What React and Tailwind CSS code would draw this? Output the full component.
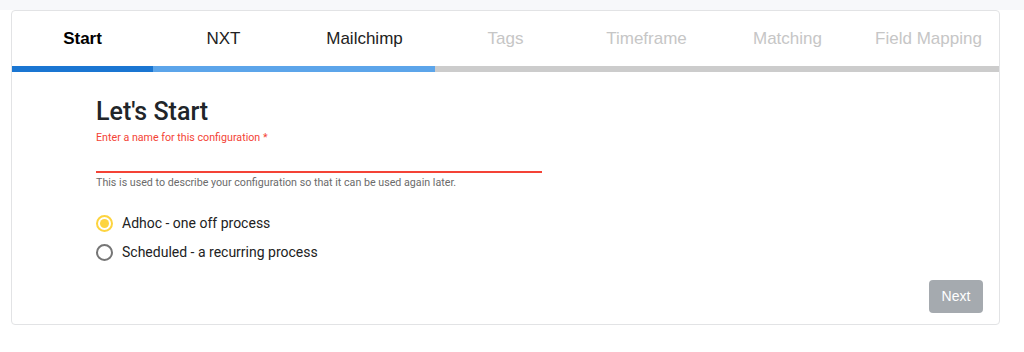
import React from "react";

const tabs = [
  { label: "Start", cls: "font-bold text-black" },
  { label: "NXT", cls: "text-[#222]" },
  { label: "Mailchimp", cls: "text-[#222]" },
  { label: "Tags", cls: "text-[#c6c6c6]" },
  { label: "Timeframe", cls: "text-[#c6c6c6]" },
  { label: "Matching", cls: "text-[#c6c6c6]" },
  { label: "Field Mapping", cls: "text-[#c6c6c6]" },
];

export default function App() {
  return (
    <div className="w-[1024px] h-[352px] bg-white font-['Liberation_Sans',sans-serif] overflow-hidden">
      <div className="h-[10px] bg-[#f7f8fa]" />
      <div className="ml-[11px] w-[989px] border border-[#e2e3e5] rounded-[4px] bg-white overflow-hidden">
        <div className="grid grid-cols-7 h-[55px] items-center">
          {tabs.map((t) => (
            <div key={t.label} className={`text-center text-[17px] leading-[20px] ${t.cls}`}>
              {t.label}
            </div>
          ))}
        </div>
        <div className="flex h-[6px]">
          <div className="w-[141px] bg-[#1a76d2]" />
          <div className="w-[282px] bg-[#5ca5ea]" />
          <div className="flex-1 bg-[#cccccc]" />
        </div>
        <div className="pl-[84px] pt-[25px] font-['Roboto',sans-serif]">
          <h1 className="text-[25px] leading-[30px] text-[#212529] font-medium">Let's Start</h1>
          <div className="mt-[3px] text-[10.7px] leading-[16px] text-[#f44336]">
            Enter a name for this configuration *
          </div>
          <div className="w-[446px] h-[27px] border-b-2 border-[#f44336]" />
          <div className="mt-[3px] text-[10.7px] leading-[14px] text-[#6b6b6b]">
            This is used to describe your configuration so that it can be used again later.
          </div>
          <div className="mt-[19px] flex flex-col">
            <div className="flex items-center h-[29px]">
              <span className="w-[17px] h-[17px] rounded-full border-2 border-[#fdd43f] flex items-center justify-center">
                <span className="w-[9px] h-[9px] rounded-full bg-[#fdd43f]" />
              </span>
              <span className="ml-[9px] text-[14px] text-[#222]">Adhoc - one off process</span>
            </div>
            <div className="flex items-center h-[29px]">
              <span className="w-[17px] h-[17px] rounded-full border-2 border-[#767676]" />
              <span className="ml-[9px] text-[14px] text-[#222]">Scheduled - a recurring process</span>
            </div>
          </div>
        </div>
        <div className="flex justify-end pr-[16px] pb-[11px] mt-[13px]">
          <button className="w-[54px] h-[33px] rounded-[4px] bg-[#a5aaaf] text-white text-[14px] font-['Liberation_Sans',sans-serif]">
            Next
          </button>
        </div>
      </div>
    </div>
  );
}
